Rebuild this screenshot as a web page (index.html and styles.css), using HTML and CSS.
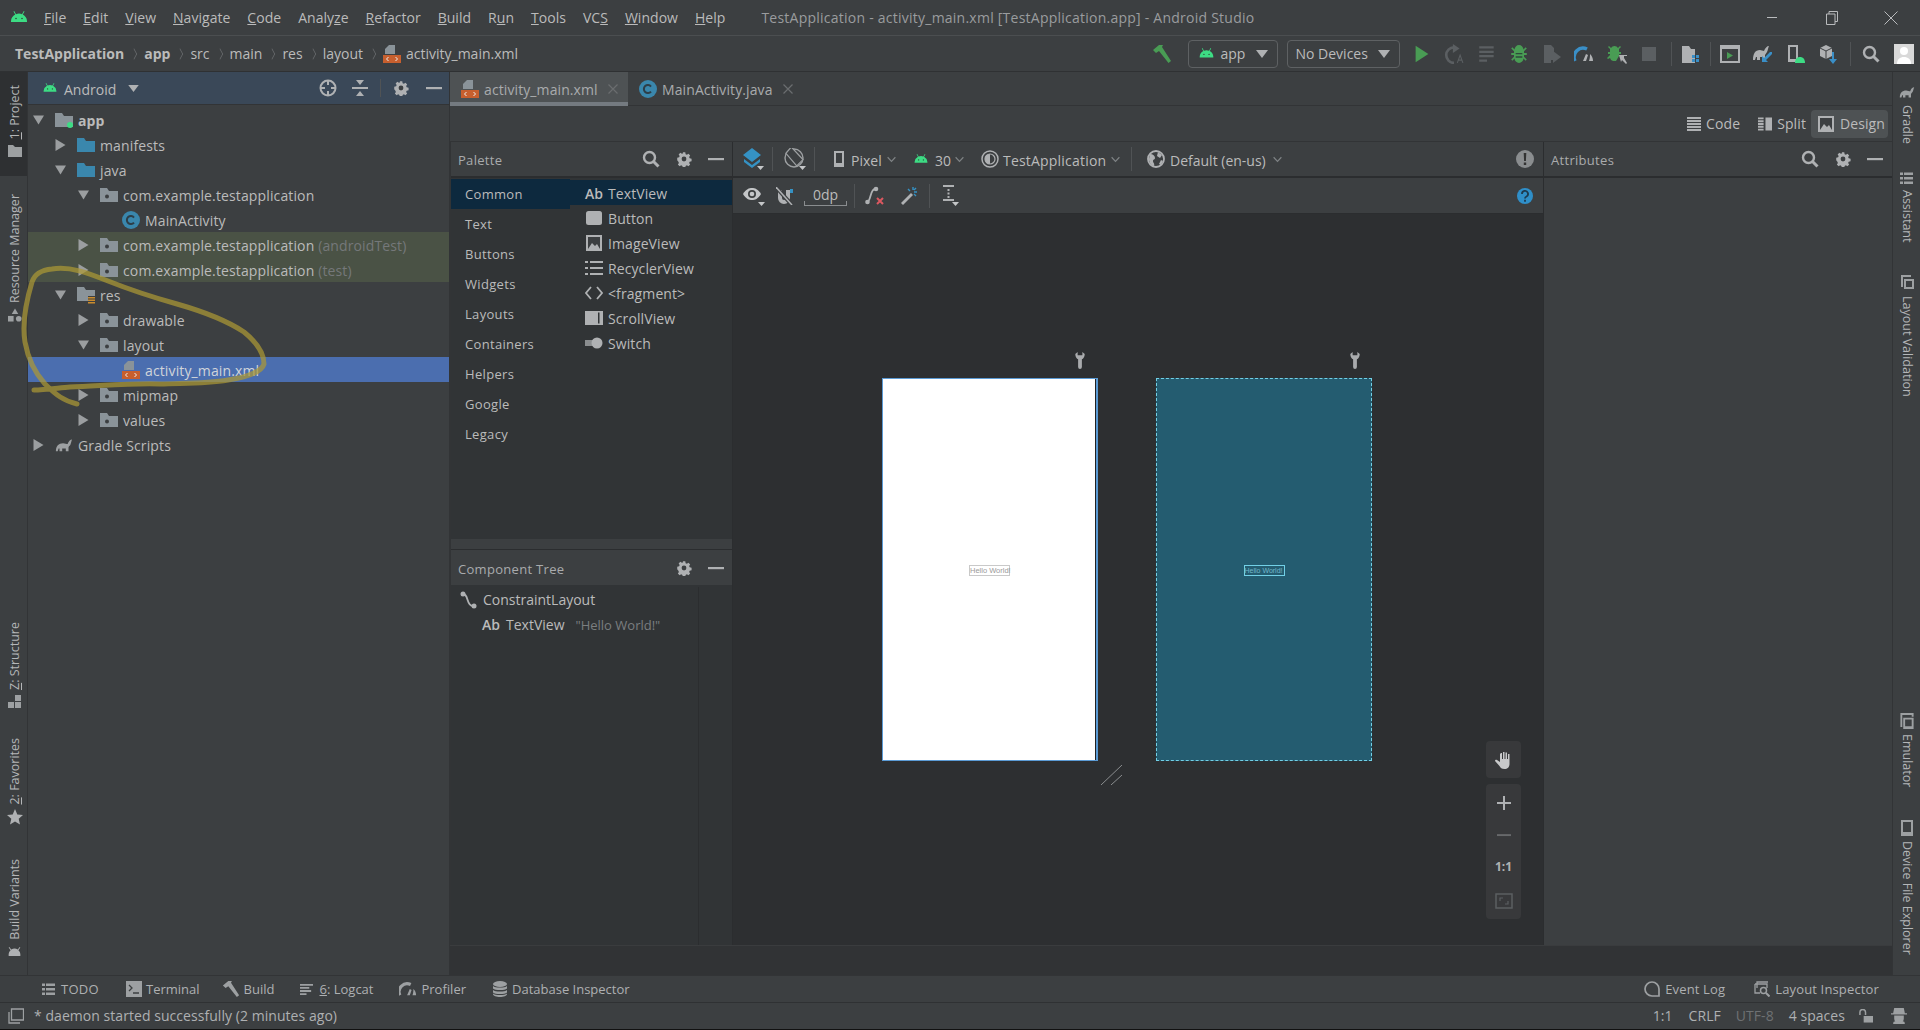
FILE: index.html
```html
<!DOCTYPE html>
<html lang="en">
<head>
<meta charset="utf-8">
<title>TestApplication - Android Studio</title>
<link rel="stylesheet" href="styles.css">
</head>
<body>
<svg class="sprite" aria-hidden="true">
  <symbol id="android" viewBox="0 0 20 16"><path d="M5.2 1 7 4.2a7 7 0 0 1 6 0L14.8 1l.7.4-1.7 3.2A8 8 0 0 1 18 11v1H2v-1a8 8 0 0 1 4.2-6.4L4.5 1.4z" fill="#3ddc84"/><circle cx="7" cy="8.5" r=".8" fill="#2d4a3a"/><circle cx="13" cy="8.5" r=".8" fill="#2d4a3a"/></symbol>
  <symbol id="android-grey" viewBox="0 0 20 16"><path d="M2 1l3 4a9 9 0 0 1 10 0l3-4 1 .7-3 4.3a8 8 0 0 1 3 6v3H1v-3a8 8 0 0 1 3-6L1 1.700z" fill="#afb1b3"/></symbol>
  <symbol id="folder" viewBox="0 0 18 16"><path d="M0 1h7l2 3h9v11H0z" fill="#8a9399"/></symbol>
  <symbol id="pkg" viewBox="0 0 18 16"><path d="M0 1h7l2 3h9v11H0z" fill="#8a9399"/><circle cx="7" cy="9.500" r="2" fill="#3c3f41"/></symbol>
  <symbol id="src" viewBox="0 0 18 16"><path d="M0 1h7l2 3h9v11H0z" fill="#3a87ad"/></symbol>
  <symbol id="app-folder" viewBox="0 0 18 16"><path d="M0 1h7l2 3h9v11H0z" fill="#8a9399"/><circle cx="15" cy="13" r="3" fill="#3ddc84"/></symbol>
  <symbol id="res" viewBox="0 0 18 18"><path d="M0 1h7l2 3h9v6h-7v5H0z" fill="#8a9399"/><path d="M11 11h7v1.500h-7zM11 13.500h7V15h-7zM11 16h7v1.500h-7z" fill="#c98b2d"/></symbol>
  <symbol id="xml" viewBox="0 0 18 18"><path d="M6 0h6v9H2V4z" fill="#8a9399"/><path d="M0 10h18v8H0z" fill="#c75f2e"/><path d="M5.500 12 3.500 14l2 2M12.500 12l2 2-2 2" fill="none" stroke="#eee" stroke-width="1"/></symbol>
  <symbol id="cls" viewBox="0 0 18 18"><circle cx="9" cy="9" r="9" fill="#3a87ad"/><path d="M12 6.500A4 4 0 1 0 12 11.500" fill="none" stroke="#2d3e48" stroke-width="2"/></symbol>
  <symbol id="gradle" viewBox="0 0 20 14"><path d="M1 14c0-6 3-9 8-9 2 0 4 1 5 1 1-3 3-5 5-5-1 2-1 4-2 6-1 1-2 2-2 3v4h-3v-3H8v3H5v-3H4l-1 3z" fill="#9da0a2"/></symbol>
  <symbol id="gear" viewBox="0 0 16 16"><path d="M6.500 0h3l.4 2.200 1.500.7 1.900-1.200 2 2.200-1.200 1.800.6 1.500 2.300.5v3l-2.300.5-.6 1.500 1.200 1.800-2 2.200-1.900-1.200-1.500.7-.4 2.200h-3l-.4-2.200-1.500-.7-1.900 1.200-2-2.200 1.200-1.800-.6-1.500L-.100 9.500v-3l2.300-.5.600-1.500L1.600 2.700l2-2.200 1.900 1.200L7 1z" transform="translate(1.300 1.300) scale(.84)" fill="#afb1b3"/><circle cx="8" cy="8" r="2.400" fill="#3c3f41"/></symbol>
  <symbol id="search" viewBox="0 0 18 18"><circle cx="7.500" cy="7.500" r="5.500" fill="none" stroke="#afb1b3" stroke-width="2.400"/><path d="M11.500 11.500 16.500 16.500" stroke="#afb1b3" stroke-width="3"/></symbol>
  <symbol id="minus" viewBox="0 0 16 16"><path d="M0 7h16v2.200H0z" fill="#afb1b3"/></symbol>
  <symbol id="target" viewBox="0 0 18 18"><circle cx="9" cy="9" r="7.500" fill="none" stroke="#afb1b3" stroke-width="2"/><path d="M9 1v5M9 12v5M1 9h5M12 9h5" stroke="#afb1b3" stroke-width="2"/></symbol>
  <symbol id="collapse" viewBox="0 0 16 16"><path d="M0 7h16v2H0zM4 0h8L8 5zM4 16h8l-4-5z" fill="#afb1b3"/></symbol>
  <symbol id="caret" viewBox="0 0 12 8"><path d="M0 0h12L6 8z" fill="#afb1b3"/></symbol>
  <symbol id="chev" viewBox="0 0 10 7"><path d="M.7 1 5 5.500 9.300 1" fill="none" stroke="#7f8385" stroke-width="1.300"/></symbol>
  <symbol id="arrow-r" viewBox="0 0 10 12"><path d="M0 0l10 6-10 6z" fill="#9b9ea0"/></symbol>
  <symbol id="arrow-d" viewBox="0 0 12 10"><path d="M0 0h12L6 10z" fill="#9b9ea0"/></symbol>
  <symbol id="hammer" viewBox="0 0 20 20"><path d="M1 6 7 1h4l-1 2 9 14-2.500 2L7 7 4 9z" fill="#499c54"/></symbol>
  <symbol id="hammer-grey" viewBox="0 0 20 20"><path d="M1 6 7 1h4l-1 2 9 14-2.500 2L7 7 4 9z" fill="#9da0a2"/></symbol>
  <symbol id="play" viewBox="-3 -2 20 22"><path d="M0 0l14 9-14 9z" fill="#499c54"/></symbol>
  <symbol id="rerun" viewBox="0 0 18 18"><path d="M9 3a7 7 0 1 0 0 14" fill="none" stroke="#5b5f62" stroke-width="2.400"/><path d="M8 0l6 4-6 4z" fill="#5b5f62"/><path d="M12 17l2.500-7 2.500 7M13 14.500h3" fill="none" stroke="#5b5f62"/></symbol>
  <symbol id="lines" viewBox="0 0 18 18"><path d="M2 2h13v2H2zM2 6h13v2H2zM2 10h13v2H2zM2 14h7v2H2z" fill="#5b5f62"/></symbol>
  <symbol id="bug" viewBox="0 0 18 18"><path d="M5 5a4 4 0 0 1 8 0l2-2 1 1-2.500 2.500V8H16v2h-2.500v1.500L16 14l-1 1-2-2a4 4 0 0 1-8 0l-2 2-1-1 2.500-2.500V10H2V8h2.500V6.500L2 4l1-1z" fill="#499c54"/><path d="M6 8h6v1.300H6zM6 11h6v1.300H6z" fill="#2d4a3a"/></symbol>
  <symbol id="attach" viewBox="0 0 20 20"><path d="M2 1h7l3 3v12H9v3H2z" fill="#5b5f62"/><path d="M11 7l8 6-8 6z" fill="#5b5f62"/></symbol>
  <symbol id="gauge" viewBox="0 0 20 16"><path d="M1 15A9 9 0 0 1 13 3" fill="none" stroke="#3a8fc7" stroke-width="3.500"/><path d="M9 15l3-7 2 1-2 6zM15 15c1-3 1-5 1-7 2 2 3 4 3 7z" fill="#afb1b3"/></symbol>
  <symbol id="gauge-grey" viewBox="0 0 20 16"><path d="M1 15A9 9 0 0 1 13 3" fill="none" stroke="#9da0a2" stroke-width="3.500"/><path d="M9 15l3-7 2 1-2 6zM15 15c1-3 1-5 1-7 2 2 3 4 3 7z" fill="#9da0a2"/></symbol>
  <symbol id="bug-arrow" viewBox="0 0 20 20"><path d="M4 4a4 4 0 0 1 7 0l2-2 1 1-2 2v3h2v2h-2v2l-3 5H6a4 4 0 0 1-3-3l-2 1-1-1 3-3V10H1V8h2V5L1 3l1-1z" fill="#499c54"/><path d="M12 11h8v1h-3v2l3 5-1 1-4-4-1 2z" fill="#afb1b3"/></symbol>
  <symbol id="stop" viewBox="-3 -3 20 20"><path d="M0 0h14v14H0z" fill="#5b5f62"/></symbol>
  <symbol id="proj-struct" viewBox="0 0 20 20"><path d="M1 2h7l2 3h4v14H1z" fill="#afb1b3"/><path d="M11 11h3v3h-3zM15 11h3v3h-3zM11 15h3v3h-3zM15 15h3v3h-3z" fill="#3a8fc7"/></symbol>
  <symbol id="avd-run" viewBox="0 0 20 20"><path d="M1 2h18v16H1z" fill="none" stroke="#afb1b3" stroke-width="2"/><path d="M1 2h18v3H1z" fill="#afb1b3"/><path d="M7 8l6 3.500L7 15z" fill="#499c54"/></symbol>
  <symbol id="sync" viewBox="0 0 20 20"><path d="M0 16c0-6 2-10 7-10 1 0 3 1 4 1 1-3 3-5 5-5-1 2-1 4-2 6l-2 3v5h-3v-3H7v3H4v-3H3l-1 3z" fill="#afb1b3"/><path d="M19 8v2l-6 6 2 2H9v-6l2 2 6-6z" fill="#3a8fc7"/></symbol>
  <symbol id="phone-droid" viewBox="0 0 20 20"><path d="M2 1h10v17H2zM4 3v12h6V3z" fill="#afb1b3"/><path d="M9 19c0-4 2-6 5-6s5 2 5 6z" fill="#3ddc84"/></symbol>
  <symbol id="sdk" viewBox="0 0 20 20"><path d="M7 1l6 3v8l-6 3-6-3V4z" fill="#afb1b3"/><path d="M7 7 1 4M7 7l6-3M7 7v8" stroke="#3c3f41"/><path d="M15 8v7h3l-4 5-4-5h3V8z" fill="#3a8fc7"/></symbol>
  <symbol id="code" viewBox="0 0 14 14"><path d="M0 0h14v2H0zM0 3h14v2H0zM0 6h14v2H0zM0 9h14v2H0zM0 12h14v2H0z" fill="#afb1b3"/></symbol>
  <symbol id="split" viewBox="0 0 15 14"><path d="M0 0h6v2H0zM0 3h6v2H0zM0 6h6v2H0zM0 9h6v2H0zM0 12h6v2H0zM8 0h7v14H8z" fill="#afb1b3"/></symbol>
  <symbol id="image" viewBox="0 0 16 16"><path d="M0 0h16v16H0z" fill="#afb1b3"/><path d="M2 2h12v12H2z" fill="#3c3f41"/><path d="M2 14l4-6 3 3 2-2 3 5z" fill="#afb1b3"/></symbol>
  <symbol id="warn" viewBox="0 0 18 18"><circle cx="9" cy="9" r="9" fill="#8a8d8f"/><path d="M7.700 3h2.600l-.4 8H8.100zM7.800 12.500h2.400v2.500H7.800z" fill="#333"/></symbol>
  <symbol id="help" viewBox="0 0 16 16"><circle cx="8" cy="8" r="8" fill="#2f8fc9"/><path d="M5 6a3 3 0 1 1 4.500 2.500C8.500 9 8 9.500 8 10.500M8 11.800v2" fill="none" stroke="#1d3b50" stroke-width="1.800"/></symbol>
  <symbol id="layers" viewBox="0 0 22 22"><path d="M10 0l9 7-9 7-9-7z" fill="#3592c4"/><path d="M2 11l8 6 8-6v3l-8 6-8-6z" fill="#3592c4"/><path d="M15 18h7l-3.500 4z" fill="#c4c6c8"/></symbol>
  <symbol id="rotate" viewBox="0 0 22 22"><circle cx="10" cy="10" r="9" fill="none" stroke="#9da0a2" stroke-width="1.400"/><path d="M7 0 1 7l12 14 7-7z" fill="#3c3f41" stroke="#9da0a2" stroke-width="1.400" transform="translate(1 -1) scale(.9)"/><path d="M15 18h7l-3.500 4z" fill="#c4c6c8"/></symbol>
  <symbol id="phone" viewBox="0 0 10 16"><path d="M0 0h10v16H0zM2 2v10h6V2z" fill="#afb1b3"/></symbol>
  <symbol id="theme" viewBox="0 0 18 18"><circle cx="9" cy="9" r="8" fill="none" stroke="#afb1b3" stroke-width="1.500"/><circle cx="9" cy="9" r="5" fill="none" stroke="#afb1b3" stroke-width="1.200"/><path d="M9 4a5 5 0 0 0 0 10z" fill="#afb1b3"/></symbol>
  <symbol id="globe" viewBox="0 0 18 18"><circle cx="9" cy="9" r="8" fill="#3c3f41" stroke="#afb1b3" stroke-width="1.800"/><path d="M3 4c3 0 5 2 5 4s-2 1-2 3 2 2 1 5c-3 0-5-4-5-7zM11 2l4 3-2 3-3-2zM14 10l2 1-2 4-2-1z" fill="#afb1b3"/></symbol>
  <symbol id="eye" viewBox="0 0 22 20"><path d="M0 8c3-5 6-6 9-6s6 1 9 6c-3 5-6 6-9 6S3 13 0 8z" fill="#c4c6c8"/><circle cx="9" cy="8" r="4" fill="#3c3f41"/><circle cx="9" cy="8" r="2.300" fill="#c4c6c8"/><path d="M15 16h7l-3.500 4z" fill="#c4c6c8"/></symbol>
  <symbol id="magnet" viewBox="0 0 18 18"><path d="M2 3v8a6 6 0 0 0 12 0V3h-4v8a2 2 0 0 1-4 0V3z" fill="#afb1b3"/><path d="M0 0l16 18" stroke="#3c3f41" stroke-width="4"/><path d="M0 0l16 18" stroke="#afb1b3" stroke-width="1.500"/><path d="M14 2h3v4h-3z" fill="#3592c4"/></symbol>
  <symbol id="constraint" viewBox="0 0 20 20"><path d="M2 16c4 0 3-13 8-13" fill="none" stroke="#afb1b3" stroke-width="1.800"/><circle cx="2.500" cy="16" r="2.300" fill="#afb1b3"/><circle cx="11" cy="3" r="2.300" fill="#afb1b3"/><path d="M12 12l6 6M18 12l-6 6" stroke="#db5860" stroke-width="2"/></symbol>
  <symbol id="wand" viewBox="0 0 18 18"><path d="M1 16 11 6l2 2L3 18z" fill="#afb1b3"/><path d="M13 0v3M17 5h-3M16 1l-2 2M8 2l2 2M16 9l-2-2" stroke="#3592c4" stroke-width="1.400"/></symbol>
  <symbol id="align" viewBox="0 0 18 22"><path d="M1 0h11v2H1zM1 14h11v2H1zM5.500 4h2v2h-2zM5.500 7.500h2v2h-2zM5.500 11h2v2h-2z" fill="#afb1b3"/><path d="M10 17h7l-3.500 4z" fill="#c4c6c8"/></symbol>
  <symbol id="wrench" viewBox="0 0 10 18"><path d="M0 2c0 3 1.500 5 3 5.700V16a2 2 0 0 0 4 0V7.700C8.500 7 10 5 10 2L7.500 0v3.500h-5V0z" fill="#a9abad"/></symbol>
  <symbol id="button" viewBox="0 0 16 16"><rect x="0" y="1" width="16" height="14" rx="2.500" fill="#afb1b3"/></symbol>
  <symbol id="list" viewBox="0 0 18 14"><path d="M0 0h3v2H0zM0 6h3v2H0zM0 12h3v2H0zM5 0h13v2H5zM5 6h13v2H5zM5 12h13v2H5z" fill="#afb1b3"/></symbol>
  <symbol id="brackets" viewBox="0 0 18 14"><path d="M6 1 1 7l5 6M12 1l5 6-5 6" fill="none" stroke="#afb1b3" stroke-width="1.800"/></symbol>
  <symbol id="scroll" viewBox="0 0 18 14"><path d="M0 0h18v14H0z" fill="#afb1b3"/><path d="M13 1.500h1.500v11H13z" fill="#313436"/></symbol>
  <symbol id="switch" viewBox="0 0 18 12"><path d="M0 3h8v6H0z" fill="#8a8d8f"/><circle cx="12" cy="6" r="5.500" fill="#afb1b3"/></symbol>
  <symbol id="tree" viewBox="0 0 18 18"><path d="M3 3c6 0 3 12 10 12" fill="none" stroke="#afb1b3" stroke-width="1.800"/><circle cx="3" cy="3" r="2.500" fill="#afb1b3"/><circle cx="14" cy="15" r="2.500" fill="#afb1b3"/></symbol>
  <symbol id="hand" viewBox="0 0 18 18"><path d="M6 2h1v6h1V1h1.500v7h1V1.500H12V8h1V3h1.500v10c0 3-2 5-5 5-3 0-4-1-5-3L0 10c0-1 1-1.500 2-1l3 2V3z" fill="#c8c9ca"/></symbol>
  <symbol id="plus" viewBox="0 0 14 14"><path d="M6 0h2v6h6v2H8v6H6V8H0V6h6z" fill="#afb1b3"/></symbol>
  <symbol id="fit" viewBox="0 0 18 16"><path d="M1 1h16v14H1z" fill="none" stroke="#5b5f62" stroke-width="1.500"/><path d="M5 8V5h3M13 8v3h-3" fill="none" stroke="#5b5f62" stroke-width="1.200"/></symbol>
  <symbol id="logo-folder" viewBox="0 0 14 12"><path d="M0 0h5l2 2h7v10H0z" fill="#9da0a2"/></symbol>
  <symbol id="shapes" viewBox="0 0 15 14"><path d="M7.500 0 11 6H4z" fill="#9da0a2"/><path d="M0 8h6v6H0z" fill="#9da0a2"/><circle cx="11.500" cy="11" r="3" fill="#9da0a2"/></symbol>
  <symbol id="struct" viewBox="0 0 13 13"><path d="M7 0h6v6H7zM0 7h6v6H0zM7 7h6v6H7z" fill="#9da0a2"/></symbol>
  <symbol id="star" viewBox="0 0 16 16"><path d="M8 0l2.300 5.400 5.700.5-4.300 3.800 1.300 5.800L8 12.500l-5 3 1.300-5.800L0 5.900l5.700-.5z" fill="#afb1b3"/></symbol>
  <symbol id="list-s" viewBox="0 0 13 12"><path d="M0 0h3v2.500H0zM0 4.500h3V7H0zM0 9h3v2.500H0zM4 0h9v2.500H4zM4 4.500h9V7H4zM4 9h9v2.500H4z" fill="#9da0a2"/></symbol>
  <symbol id="layoutval" viewBox="0 0 14 16"><path d="M1 3V0h10v2H3v10H1zM4 4h10v10H4zM6 6v6h6V6z" fill="#9da0a2"/></symbol>
  <symbol id="emu" viewBox="0 0 14 17"><path d="M0 0h14v4H12V2H2v13H0zM3 5h11v12H3zM5 7v7h7V7z" fill="#9da0a2"/></symbol>
  <symbol id="device" viewBox="0 0 12 16"><path d="M0 0h12v16H0zM2 2v10h8V2z" fill="#9da0a2"/></symbol>
  <symbol id="terminal" viewBox="0 0 16 16"><path d="M0 0h16v16H0z" fill="#9da0a2"/><path d="M3 4l3 3-3 3M7 12h6" fill="none" stroke="#3c3f41" stroke-width="1.300"/></symbol>
  <symbol id="logcat" viewBox="0 0 14 12"><path d="M0 0h14v2H0zM0 3.300h10v2H0zM0 6.600h12v2H0zM0 10h7v2H0z" fill="#9da0a2"/></symbol>
  <symbol id="db" viewBox="0 0 14 16"><ellipse cx="7" cy="3" rx="7" ry="3" fill="#9da0a2"/><path d="M0 5c2 2 12 2 14 0v2.500c-2 2-12 2-14 0zM0 9c2 2 12 2 14 0v2.500c-2 2-12 2-14 0zM0 12.500c2 2 12 2 14 0V13c0 4-14 4-14 0z" fill="#9da0a2"/></symbol>
  <symbol id="event" viewBox="0 0 16 16"><path d="M8 1a7 7 0 1 0 0 14h7V8a7 7 0 0 0-7-7z" fill="none" stroke="#9da0a2" stroke-width="1.700"/></symbol>
  <symbol id="inspector" viewBox="0 0 16 16"><path d="M3 7V1h11M1 3h12v4M1 3v9h5" fill="none" stroke="#9da0a2" stroke-width="1.300"/><circle cx="9.500" cy="9.500" r="3" fill="none" stroke="#9da0a2" stroke-width="1.500"/><path d="M12 12l3.500 3.500" stroke="#9da0a2" stroke-width="2"/></symbol>
  <symbol id="stack" viewBox="0 0 16 16"><path d="M3.500 1h12v11h-12z" fill="none" stroke="#9da0a2" stroke-width="1.300"/><path d="M1 4v11h11" fill="none" stroke="#9da0a2" stroke-width="1.300"/></symbol>
  <symbol id="lock" viewBox="0 0 15 14"><path d="M1 6V3a3 3 0 0 1 6 0v3" fill="none" stroke="#9da0a2" stroke-width="1.600"/><path d="M5 7h10v7H5z" fill="#9da0a2"/></symbol>
  <symbol id="hector" viewBox="0 0 15 15"><path d="M3 0h9l1 5h2v1H0V5h2zM3 7h9v3a4 4 0 0 1-9 0zM2 15c0-2 1-3 3-3h5c2 0 3 1 3 3z" fill="#9da0a2"/></symbol>
  <symbol id="restore" viewBox="0 0 12 14"><path d="M3 3V.5h8.500v10H9M.5 3h8.500v10.500H.5z" fill="none" stroke="#b9bbbd"/></symbol>
  <symbol id="close" viewBox="0 0 14 14"><path d="M.5.500l13 13M13.500.500l-13 13" stroke="#b9bbbd" stroke-width="1"/></symbol>
  <symbol id="x" viewBox="0 0 10 10"><path d="M.5.500l9 9M9.500.500l-9 9" stroke="#6a6d6f" stroke-width="1.200"/></symbol>
  <symbol id="avatar" viewBox="0 0 20 20"><path d="M0 0h20v20H0z" fill="#d9d9d9"/><circle cx="10" cy="7" r="4" fill="#fff"/><path d="M3 20c0-5 3-7 7-7s7 2 7 7z" fill="#fff"/></symbol>
  <symbol id="resize" viewBox="0 0 21 20"><path d="M0 20 21 0M10 20 21 10" stroke="#8a8d8f"/></symbol>
</svg>

<div class="app">
  <header class="titlebar">
    <svg class="logo"><use href="#android"/></svg>
    <nav class="menu">
      <span><u>F</u>ile</span><span><u>E</u>dit</span><span><u>V</u>iew</span><span><u>N</u>avigate</span><span><u>C</u>ode</span><span>Analy<u>z</u>e</span><span><u>R</u>efactor</span><span><u>B</u>uild</span><span>R<u>u</u>n</span><span><u>T</u>ools</span><span>VC<u>S</u></span><span><u>W</u>indow</span><span><u>H</u>elp</span>
    </nav>
    <div class="wintitle">TestApplication - activity_main.xml [TestApplication.app] - Android Studio</div>
    <div class="winctl">
      <span class="win-min"></span>
      <svg class="i12"><use href="#restore"/></svg>
      <svg class="i14"><use href="#close"/></svg>
    </div>
  </header>

  <div class="navbar">
    <div class="crumbs">
      <b>TestApplication</b><i class="sep"></i><b>app</b><i class="sep"></i><span>src</span><i class="sep"></i><span>main</span><i class="sep"></i><span>res</span><i class="sep"></i><span>layout</span><i class="sep"></i><svg class="i18"><use href="#xml"/></svg><span>activity_main.xml</span>
    </div>
    <div class="runbar">
      <svg class="i20 hammer"><use href="#hammer"/></svg>
      <div class="combo combo-app"><svg class="droid"><use href="#android"/></svg><span>app</span><svg class="caret"><use href="#caret"/></svg></div>
      <div class="combo combo-dev"><span>No Devices</span><svg class="caret"><use href="#caret"/></svg></div>
      <div class="runicons">
        <svg class="i20"><use href="#play"/></svg>
        <svg class="i20"><use href="#rerun"/></svg>
        <svg class="i20"><use href="#lines"/></svg>
        <svg class="i20"><use href="#bug"/></svg>
        <svg class="i20"><use href="#attach"/></svg>
        <svg class="i20"><use href="#gauge"/></svg>
        <svg class="i20"><use href="#bug-arrow"/></svg>
        <svg class="i20"><use href="#stop"/></svg>
      </div>
      <i class="vsep s-a"></i>
      <svg class="i20 s-b"><use href="#proj-struct"/></svg>
      <i class="vsep s-b"></i>
      <div class="sdkicons">
        <svg class="i20"><use href="#avd-run"/></svg>
        <svg class="i20"><use href="#sync"/></svg>
        <svg class="i20"><use href="#phone-droid"/></svg>
        <svg class="i20"><use href="#sdk"/></svg>
      </div>
      <i class="vsep s-c"></i>
      <svg class="i18 s-d"><use href="#search"/></svg>
      <svg class="i20 s-e"><use href="#avatar"/></svg>
    </div>
  </div>

  <div class="workspace">
    <aside class="strip strip-left">
      <div class="tool tool-active"><span class="vtext"><u>1</u>: Project</span><svg class="i14"><use href="#logo-folder"/></svg></div>
      <div class="tool tool-res"><span class="vtext">Resource Manager</span><svg class="i14"><use href="#shapes"/></svg></div>
      <div class="tool tool-struct"><span class="vtext"><u>Z</u>: Structure</span><svg class="i13"><use href="#struct"/></svg></div>
      <div class="tool tool-fav"><span class="vtext"><u>2</u>: Favorites</span><svg class="i16"><use href="#star"/></svg></div>
      <div class="tool tool-var"><span class="vtext">Build Variants</span><svg class="i13"><use href="#android-grey"/></svg></div>
    </aside>

    <section class="project">
      <div class="project-head">
        <svg class="head-droid"><use href="#android"/></svg>
        <span class="head-title">Android</span>
        <svg class="caret head-caret"><use href="#caret"/></svg>
        <div class="head-tools">
          <svg class="i18"><use href="#target"/></svg>
          <svg class="i16 ht-collapse"><use href="#collapse"/></svg>
          <i class="vsep ht-sep"></i>
          <svg class="i16 ht-gear"><use href="#gear"/></svg>
          <svg class="i16 ht-min"><use href="#minus"/></svg>
        </div>
      </div>
      <div class="tree">
        <div class="row l0"><svg class="arr"><use href="#arrow-d"/></svg><svg class="ico"><use href="#app-folder"/></svg><b>app</b></div>
        <div class="row l1"><svg class="arr"><use href="#arrow-r"/></svg><svg class="ico"><use href="#src"/></svg><span>manifests</span></div>
        <div class="row l1"><svg class="arr"><use href="#arrow-d"/></svg><svg class="ico"><use href="#src"/></svg><span>java</span></div>
        <div class="row l2"><svg class="arr"><use href="#arrow-d"/></svg><svg class="ico"><use href="#pkg"/></svg><span>com.example.testapplication</span></div>
        <div class="row l3"><i class="arr"></i><svg class="ico"><use href="#cls"/></svg><span>MainActivity</span></div>
        <div class="row l2 test"><svg class="arr"><use href="#arrow-r"/></svg><svg class="ico"><use href="#pkg"/></svg><span>com.example.testapplication <em>(androidTest)</em></span></div>
        <div class="row l2 test"><svg class="arr"><use href="#arrow-r"/></svg><svg class="ico"><use href="#pkg"/></svg><span>com.example.testapplication <em>(test)</em></span></div>
        <div class="row l1"><svg class="arr"><use href="#arrow-d"/></svg><svg class="ico"><use href="#res"/></svg><span>res</span></div>
        <div class="row l2"><svg class="arr"><use href="#arrow-r"/></svg><svg class="ico"><use href="#pkg"/></svg><span>drawable</span></div>
        <div class="row l2"><svg class="arr"><use href="#arrow-d"/></svg><svg class="ico"><use href="#pkg"/></svg><span>layout</span></div>
        <div class="row l3 selected"><i class="arr"></i><svg class="ico"><use href="#xml"/></svg><span>activity_main.xml</span></div>
        <div class="row l2"><svg class="arr"><use href="#arrow-r"/></svg><svg class="ico"><use href="#pkg"/></svg><span>mipmap</span></div>
        <div class="row l2"><svg class="arr"><use href="#arrow-r"/></svg><svg class="ico"><use href="#pkg"/></svg><span>values</span></div>
        <div class="row l0"><svg class="arr"><use href="#arrow-r"/></svg><svg class="ico"><use href="#gradle"/></svg><span>Gradle Scripts</span></div>
      </div>
    </section>

    <main class="center">
      <div class="tabs">
        <div class="tab tab-active"><svg class="i18"><use href="#xml"/></svg><span>activity_main.xml</span><svg class="x"><use href="#x"/></svg></div>
        <div class="tab"><svg class="i18"><use href="#cls"/></svg><span>MainActivity.java</span><svg class="x"><use href="#x"/></svg></div>
      </div>
      <div class="viewmodes">
        <div class="vm"><svg class="i14"><use href="#code"/></svg><span>Code</span></div>
        <div class="vm"><svg class="i14"><use href="#split"/></svg><span>Split</span></div>
        <div class="vm vm-active"><svg class="i16"><use href="#image"/></svg><span>Design</span></div>
      </div>
      <div class="editor">
        <div class="palette-col">
          <div class="panel-head"><span>Palette</span>
            <div class="panel-tools"><svg class="i18"><use href="#search"/></svg><svg class="i16"><use href="#gear"/></svg><svg class="i16"><use href="#minus"/></svg></div>
          </div>
          <div class="palette">
            <ul class="cats">
              <li class="cat-on">Common</li><li>Text</li><li>Buttons</li><li>Widgets</li><li>Layouts</li><li>Containers</li><li>Helpers</li><li>Google</li><li>Legacy</li>
            </ul>
            <ul class="items">
              <li class="item-on"><span class="ab">Ab</span><span>TextView</span></li>
              <li><svg class="pi"><use href="#button"/></svg><span>Button</span></li>
              <li><svg class="pi"><use href="#image"/></svg><span>ImageView</span></li>
              <li><svg class="pi"><use href="#list"/></svg><span>RecyclerView</span></li>
              <li><svg class="pi"><use href="#brackets"/></svg><span>&lt;fragment&gt;</span></li>
              <li><svg class="pi"><use href="#scroll"/></svg><span>ScrollView</span></li>
              <li><svg class="pi"><use href="#switch"/></svg><span>Switch</span></li>
            </ul>
          </div>
          <div class="splitter"></div>
          <div class="panel-head comp-head"><span>Component Tree</span>
            <div class="panel-tools"><svg class="i16"><use href="#gear"/></svg><svg class="i16"><use href="#minus"/></svg></div>
          </div>
          <div class="comp-body">
            <div class="comp-tree">
              <div class="comp-row"><svg class="i18"><use href="#tree"/></svg><span>ConstraintLayout</span></div>
              <div class="comp-row comp-sub"><span class="ab">Ab</span><span>TextView</span><em>"Hello World!"</em></div>
            </div>
          </div>
        </div>

        <div class="design-col">
          <div class="dtool dtool-1">
            <svg class="dt-layers"><use href="#layers"/></svg>
            <i class="vsep d-s1"></i>
            <svg class="dt-rotate"><use href="#rotate"/></svg>
            <i class="vsep d-s2"></i>
            <svg class="dt-phone"><use href="#phone"/></svg>
            <span class="dt-pixel">Pixel</span>
            <svg class="chev d-c1"><use href="#chev"/></svg>
            <svg class="dt-droid"><use href="#android"/></svg>
            <span class="dt-api">30</span>
            <svg class="chev d-c2"><use href="#chev"/></svg>
            <svg class="dt-theme"><use href="#theme"/></svg>
            <span class="dt-app">TestApplication</span>
            <svg class="chev d-c3"><use href="#chev"/></svg>
            <i class="vsep d-s3"></i>
            <svg class="dt-globe"><use href="#globe"/></svg>
            <span class="dt-locale">Default (en-us)</span>
            <svg class="chev d-c4"><use href="#chev"/></svg>
            <svg class="dt-warn"><use href="#warn"/></svg>
          </div>
          <div class="dtool dtool-2">
            <svg class="dt-eye"><use href="#eye"/></svg>
            <svg class="dt-magnet"><use href="#magnet"/></svg>
            <span class="dt-dp">0dp</span>
            <i class="vsep d-s4"></i>
            <svg class="dt-con"><use href="#constraint"/></svg>
            <svg class="dt-wand"><use href="#wand"/></svg>
            <i class="vsep d-s5"></i>
            <svg class="dt-align"><use href="#align"/></svg>
            <svg class="dt-help"><use href="#help"/></svg>
          </div>
          <div class="surface">
            <svg class="wrench w1"><use href="#wrench"/></svg>
            <svg class="wrench w2"><use href="#wrench"/></svg>
            <div class="device device-white"><span class="hello">Hello World!</span></div>
            <div class="device device-blue"><span class="hello">Hello World!</span></div>
            <svg class="resize"><use href="#resize"/></svg>
            <div class="zoom zoom-hand"><svg class="i18"><use href="#hand"/></svg></div>
            <div class="zoom zoom-ctl">
              <svg class="i14"><use href="#plus"/></svg>
              <svg class="i14 dim"><use href="#minus"/></svg>
              <b>1:1</b>
              <svg class="i18"><use href="#fit"/></svg>
            </div>
          </div>
        </div>

        <div class="attr-col">
          <div class="panel-head attr-head"><span>Attributes</span>
            <div class="panel-tools"><svg class="i18"><use href="#search"/></svg><svg class="i16"><use href="#gear"/></svg><svg class="i16"><use href="#minus"/></svg></div>
          </div>
        </div>
      </div>
      <div class="hbar"></div>
    </main>

    <aside class="strip strip-right">
      <div class="tool tool-gradle"><svg class="i16"><use href="#gradle"/></svg><span class="vtext">Gradle</span></div>
      <div class="tool tool-assist"><svg class="i13"><use href="#list-s"/></svg><span class="vtext">Assistant</span></div>
      <div class="tool tool-valid"><svg class="i16"><use href="#layoutval"/></svg><span class="vtext">Layout Validation</span></div>
      <div class="tool tool-emu"><svg class="i16"><use href="#emu"/></svg><span class="vtext">Emulator</span></div>
      <div class="tool tool-dev"><svg class="i16"><use href="#device"/></svg><span class="vtext">Device File Explorer</span></div>
    </aside>
  </div>

  <div class="toolbar">
    <div class="tb tb-todo"><svg class="i13"><use href="#list-s"/></svg><span>TODO</span></div>
    <div class="tb tb-term"><svg class="i16"><use href="#terminal"/></svg><span>Terminal</span></div>
    <div class="tb tb-build"><svg class="i18"><use href="#hammer-grey"/></svg><span>Build</span></div>
    <div class="tb tb-log"><svg class="i13"><use href="#logcat"/></svg><span><u>6</u>: Logcat</span></div>
    <div class="tb tb-prof"><svg class="i18"><use href="#gauge-grey"/></svg><span>Profiler</span></div>
    <div class="tb tb-db"><svg class="i16"><use href="#db"/></svg><span>Database Inspector</span></div>
    <div class="tb tb-event"><svg class="i16"><use href="#event"/></svg><span>Event Log</span></div>
    <div class="tb tb-li"><svg class="i16"><use href="#inspector"/></svg><span>Layout Inspector</span></div>
  </div>

  <footer class="status">
    <svg class="i16"><use href="#stack"/></svg>
    <span class="st-msg">* daemon started successfully (2 minutes ago)</span>
    <span class="st-r st-pos">1:1</span>
    <span class="st-r st-crlf">CRLF</span>
    <span class="st-r st-utf">UTF-8</span>
    <span class="st-r st-sp">4 spaces</span>
    <svg class="i14 st-lock"><use href="#lock"/></svg>
    <svg class="i16 st-hector"><use href="#hector"/></svg>
  </footer>

  <svg class="scribble" viewBox="0 0 280 160"><path d="M77 148C64 145 56 139 45 128C36 118 28 103 25 86C22 68 26 46 32 26C35 17 42 14 52 13C70 10 88 17 108 25C128 33 152 41 177 48C198 54 226 64 244 76C255 85 264 96 264 108C262 115 248 121 228 124C205 128 185 127 160 128C130 127 100 130 70 131C58 132 44 134 34 134"/></svg>
</div>
</body>
</html>
```

FILE: styles.css
```css
* { box-sizing: border-box; }
html, body { margin: 0; padding: 0; }
body { background: #3c3f41; color: #bbbbbb; font-family: "Open Sans", "Noto Sans", sans-serif; font-size: 14px; overflow: hidden; }
ul { list-style: none; margin: 0; padding: 0; }
i, em { font-style: normal; }
svg { display: block; flex: none; }
.sprite { position: absolute; width: 0; height: 0; overflow: hidden; }
.app { position: relative; width: 1920px; height: 1030px; display: flex; flex-direction: column; overflow: hidden; }

.i12 { width: 12px; height: 14px; }
.i13 { width: 13px; height: 13px; }
.i14 { width: 14px; height: 14px; }
.i16 { width: 16px; height: 16px; }
.i18 { width: 18px; height: 18px; }
.i20 { width: 20px; height: 20px; }
.vsep { display: block; width: 1px; height: 24px; background: #505355; flex: none; }
.caret { width: 12px; height: 8px; }
.chev { width: 9px; height: 7px; }

/* title bar */
.titlebar { height: 36px; display: flex; align-items: center; border-bottom: 1px solid #4b4e50; padding-left: 9px; flex: none; }
.logo { width: 20px; height: 16px; margin-right: 15px; }
.menu { display: flex; gap: 17px; letter-spacing: .03px; }
.menu span { white-space: nowrap; }
.wintitle { margin-left: 36px; color: #9a9c9e; white-space: nowrap; letter-spacing: .24px; }
.winctl { margin-left: auto; display: flex; align-items: center; padding-right: 22px; }
.win-min { width: 10px; height: 1px; background: #b9bbbd; margin-right: 49px; }
.winctl .i14 { margin-left: 46px; }

/* navigation bar */
.navbar { height: 36px; display: flex; align-items: center; border-bottom: 1px solid #2f3133; padding: 0 6px 0 15px; flex: none; }
.crumbs { display: flex; align-items: center; white-space: nowrap; }
.crumbs .sep { width: 8px; height: 8px; border-top: 1px solid #6b6e70; border-right: 1px solid #6b6e70; transform: scaleX(.55) rotate(45deg); margin: 0 6px; }
.crumbs svg { margin-right: 5px; }
.runbar { margin-left: auto; display: flex; align-items: center; }
.hammer { margin-right: 16px; }
.combo { display: flex; align-items: center; height: 28px; border: 1px solid #5e6163; border-radius: 4px; padding-left: 9px; }
.combo-app { width: 90px; }
.combo-dev { width: 113px; margin-left: 9px; padding-left: 8px; }
.combo .caret { margin-left: auto; margin-right: 9px; }
.droid { width: 17px; height: 14px; margin-right: 6px; }
.runicons { display: flex; gap: 12.500px; margin-left: 12px; }
.s-a { margin-left: 12px; }
.s-b { margin-left: 9px; }
.sdkicons { display: flex; gap: 13px; margin-left: 9px; }
.s-c { margin-left: 11px; }
.s-d { margin-left: 11px; }
.s-e { margin-left: 14px; }

/* workspace */
.workspace { height: 903px; display: flex; flex: none; }
.strip { width: 28px; flex: none; display: flex; flex-direction: column; align-items: center; font-size: 12.500px; }
.strip-left { border-right: 1px solid #323436; }
.strip-right { border-left: 1px solid #323436; }
.tool { display: flex; flex-direction: column; align-items: center; gap: 5px; width: 100%; }
.vtext { writing-mode: vertical-rl; white-space: nowrap; line-height: 14px; color: #b4b6b8; }
.strip-left .tool { padding-left: 2px; }
.strip-left .vtext { transform: rotate(180deg); }
.tool-active { background: #2e3032; padding: 13px 0 15px; height: 104px; color: #ccc; }
.tool-res { margin-top: 18px; }
.tool-struct { margin-top: auto; }
.tool-fav { margin-top: 30px; }
.tool-var { margin-top: 34px; margin-bottom: 17px; }
.tool-gradle { margin-top: 12px; }
.tool-assist { margin-top: 28px; }
.tool-valid { margin-top: 33px; }
.tool-emu { margin-top: auto; }
.tool-dev { margin-top: 33px; margin-bottom: 20px; }

/* project */
.project { width: 422px; flex: none; display: flex; flex-direction: column; border-right: 1px solid #323436; }
.project-head { height: 33px; background: #3a4858; border-bottom: 1px solid #323436; display: flex; align-items: center; padding-left: 14px; flex: none; }
.head-droid { width: 16px; height: 13px; margin-right: 6px; }
.head-title { width: 64px; padding-top: 2px; }
.head-caret { width: 11px; height: 7px; }
.head-tools { margin-left: auto; display: flex; align-items: center; padding-right: 7px; }
.ht-collapse { margin-left: 15px; }
.ht-sep { margin-left: 12px; height: 18px; }
.ht-gear { margin-left: 12px; }
.ht-min { margin-left: 17px; }
.tree { padding-top: 2px; }
.row { height: 25px; display: flex; align-items: center; white-space: nowrap; letter-spacing: .13px; }
.row b, .row span { font-weight: 400; padding-top: 2px; }
.row b { font-weight: 700; }
.row em { color: #75787a; }
.arr { width: 11px; height: 12px; margin-right: 11px; flex: none; display: block; }
.ico { width: 18px; height: 18px; margin-right: 5px; }
.l0 { padding-left: 5px; }
.l1 { padding-left: 27px; }
.l2 { padding-left: 50px; }
.l3 { padding-left: 72px; }
.test { background: #4a5245; }
.selected { background: #4b6eaf; color: #d0d4da; }

/* center */
.center { flex: 1; min-width: 0; display: flex; flex-direction: column; }
.tabs { height: 34px; display: flex; border-bottom: 1px solid #323436; flex: none; letter-spacing: .1px; }
.tab { width: 178px; padding-left: 11px; height: 34px; display: flex; align-items: center; white-space: nowrap; color: #a9abad; }
.tab-active { background: #4e5254; border-bottom: 4px solid #747a80; padding-top: 4px; }
.tab span { margin-left: 5px; }
.tab .x { width: 10px; height: 10px; margin-left: 10px; }
.viewmodes { height: 36px; display: flex; align-items: center; justify-content: flex-end; border-bottom: 1px solid #323436; padding-right: 4px; flex: none; letter-spacing: .1px; }
.vm { display: flex; align-items: center; gap: 5px; height: 28px; padding: 0 3px 0 7px; border-radius: 4px; white-space: nowrap; }
.vm + .vm { margin-left: 8px; }
.vm.vm-active { background: #4e5254; gap: 6px; margin-left: 2px; }
.editor { height: 803px; display: flex; flex: none; }
.hbar { flex: 1; background: #313335; border-top: 1px solid #3a3c3e; }

/* panels */
.panel-head { height: 36px; display: flex; align-items: center; padding-left: 7px; font-size: 13px; letter-spacing: .3px; border-bottom: 2px solid #2b2d2f; flex: none; color: #a9abad; }
.panel-head > span { padding-top: 2px; }
.panel-tools { margin-left: auto; display: flex; align-items: center; gap: 16px; padding-right: 8px; }
.palette-col { width: 282px; flex: none; display: flex; flex-direction: column; background: #313436; border-left: 1px solid #323436; }
.palette-col > .panel-head { background: #3c3f41; }
.palette { flex: none; height: 361px; display: flex; }
.cats { width: 119px; font-size: 13px; letter-spacing: .32px; padding-top: 1px; }
.cats li { height: 30px; line-height: 31px; padding-left: 14px; }
.cat-on { background: #0d293e; }
.items { flex: 1; padding-top: 2px; letter-spacing: .1px; }
.items li { height: 25px; display: flex; align-items: center; padding-left: 15px; gap: 5px; }
.items li span { padding-top: 2px; }
.item-on { background: #0d293e; }
.ab { font-weight: 600; width: 18px; }
.pi { width: 18px; height: 16px; }
.splitter { height: 11px; background: #3c3f41; border-bottom: 1px solid #2b2d2f; flex: none; }
.comp-head { height: 35px; border-bottom: 0; }
.comp-body { flex: 1; }
.comp-tree { width: 248px; height: 100%; border-right: 1px solid #2b2d2f; }
.comp-row { height: 25px; display: flex; align-items: center; padding-left: 9px; gap: 5px; white-space: nowrap; margin-top: 2px; }
.comp-sub { padding-left: 31px; margin-top: 0; gap: 6px; }
.comp-sub em { color: #7b7e80; font-size: 13px; margin-left: 5px; }
.attr-col { width: 349px; flex: none; background: #3c3f41; border-left: 1px solid #2b2d2f; }
.attr-head { padding-left: 7px; }
.attr-head .panel-tools { padding-right: 9px; gap: 16px; }

/* design */
.design-col { flex: 1; min-width: 0; display: flex; flex-direction: column; border-left: 1px solid #2b2d2f; }
.dtool { flex: none; display: flex; align-items: center; white-space: nowrap; }
.dtool-1 { height: 36px; border-bottom: 2px solid #2b2d2f; }
.dtool-1 span { padding-top: 2px; }
.dtool-2 { height: 36px; border-bottom: 1px solid #2b2d2f; }
.dtool .vsep { height: 24px; }
.dt-layers { width: 22px; height: 22px; margin-left: 9px; }
.d-s1 { margin-left: 8px; }
.dt-rotate { width: 22px; height: 22px; margin-left: 11px; }
.d-s2 { margin-left: 8px; }
.dt-phone { width: 10px; height: 16px; margin-left: 19px; }
.dt-pixel { margin-left: 7px; width: 36px; }
.dt-droid { width: 16px; height: 13px; margin-left: 17px; }
.dt-api { margin-left: 6px; width: 20px; }
.dt-theme { width: 18px; height: 18px; margin-left: 17px; }
.dt-app { margin-left: 4px; width: 108px; letter-spacing: .2px; }
.d-s3 { margin-left: 11px; }
.dt-globe { width: 18px; height: 18px; margin-left: 15px; }
.dt-locale { margin-left: 5px; width: 103px; }
.dt-warn { width: 18px; height: 18px; margin-left: auto; margin-right: 9px; }
.dt-eye { width: 22px; height: 20px; margin-left: 10px; }
.dt-magnet { width: 18px; height: 18px; margin-left: 11px; }
.dt-dp { margin-left: 10px; width: 43px; height: 20px; line-height: 18px; text-align: center; background: linear-gradient(#8a8d8f, #8a8d8f) left bottom / 1px 5px no-repeat, linear-gradient(#8a8d8f, #8a8d8f) right bottom / 1px 5px no-repeat, linear-gradient(#8a8d8f, #8a8d8f) left bottom / 100% 1px no-repeat; }
.d-s4 { margin-left: 7px; }
.dt-con { width: 20px; height: 20px; margin-left: 10px; }
.dt-wand { width: 18px; height: 18px; margin-left: 15px; }
.d-s5 { margin-left: 11px; }
.dt-align { width: 18px; height: 22px; margin-left: 12px; }
.dt-help { width: 16px; height: 16px; margin-left: auto; margin-right: 10px; }

.surface { position: relative; flex: 1; background: #2d2f31; }
.device { position: absolute; top: 164px; width: 216px; height: 383px; display: flex; align-items: center; justify-content: center; }
.device-white { left: 149px; background: #fff; border: 1px solid #5b9bd5; border-right-width: 2px; box-shadow: inset -1px 0 #222; }
.device-blue { left: 423px; background: #245c70; border: 1px dashed #72d0e6; }
.hello { width: 41px; height: 11px; font-family: "Liberation Sans", sans-serif; font-size: 7.500px; line-height: 9px; white-space: nowrap; border: 1px solid #c9c9c9; color: #9a9a9a; margin-top: 2px; text-align: center; }
.device-blue .hello { border-color: #72d0e6; color: #72b8cc; font-size: 7px; text-align: left; }
.wrench { position: absolute; top: 138px; width: 10px; height: 17px; }
.w1 { left: 342px; }
.w2 { left: 617px; }
.resize { position: absolute; left: 368px; top: 551px; width: 21px; height: 20px; }
.zoom { position: absolute; left: 753px; width: 35px; background: #38393b; border-radius: 4px; display: flex; flex-direction: column; align-items: center; }
.zoom-hand { top: 527px; height: 37px; justify-content: center; }
.zoom-ctl { top: 570px; height: 135px; padding-top: 12px; gap: 18px; }
.zoom-ctl .dim { opacity: .4; }
.zoom-ctl b { font-size: 12px; line-height: 14px; color: #b0b2b4; }

/* bottom */
.toolbar { height: 28px; flex: none; display: flex; align-items: center; position: relative; font-size: 13px; border-top: 1px solid #323436; border-bottom: 1px solid #2f3133; }
.tb { display: flex; align-items: center; gap: 4px; white-space: nowrap; color: #aeb0b2; }
.tb-todo { margin-left: 42px; gap: 6px; letter-spacing: .3px; }
.tb-term { margin-left: 27px; }
.tb-build { margin-left: 22px; }
.tb-log { margin-left: 25px; gap: 7px; }
.tb-prof { margin-left: 26px; }
.tb-db { margin-left: 26px; }
.tb-event { margin-left: auto; gap: 5px; letter-spacing: .15px; }
.tb-li { margin-left: 29px; margin-right: 41px; gap: 5px; letter-spacing: .15px; }
.status { height: 27px; flex: none; display: flex; align-items: center; border-bottom: 1px solid #111; padding-left: 8px; white-space: nowrap; color: #aeb0b2; letter-spacing: .05px; }
.status span { padding-bottom: 2px; }
.st-msg { margin-left: 10px; }
.st-pos { margin-left: auto; }
.st-crlf { margin-left: 16px; }
.st-utf { margin-left: 15px; color: #6e7173; }
.st-sp { margin-left: 15px; }
.st-lock { margin-left: 14px; }
.st-hector { margin-left: 18px; margin-right: 13px; }

.scribble { position: absolute; left: 0; top: 256px; width: 280px; height: 160px; pointer-events: none; }
.scribble path { fill: none; stroke: rgba(172, 152, 52, .72); stroke-width: 5; stroke-linecap: round; }
```
